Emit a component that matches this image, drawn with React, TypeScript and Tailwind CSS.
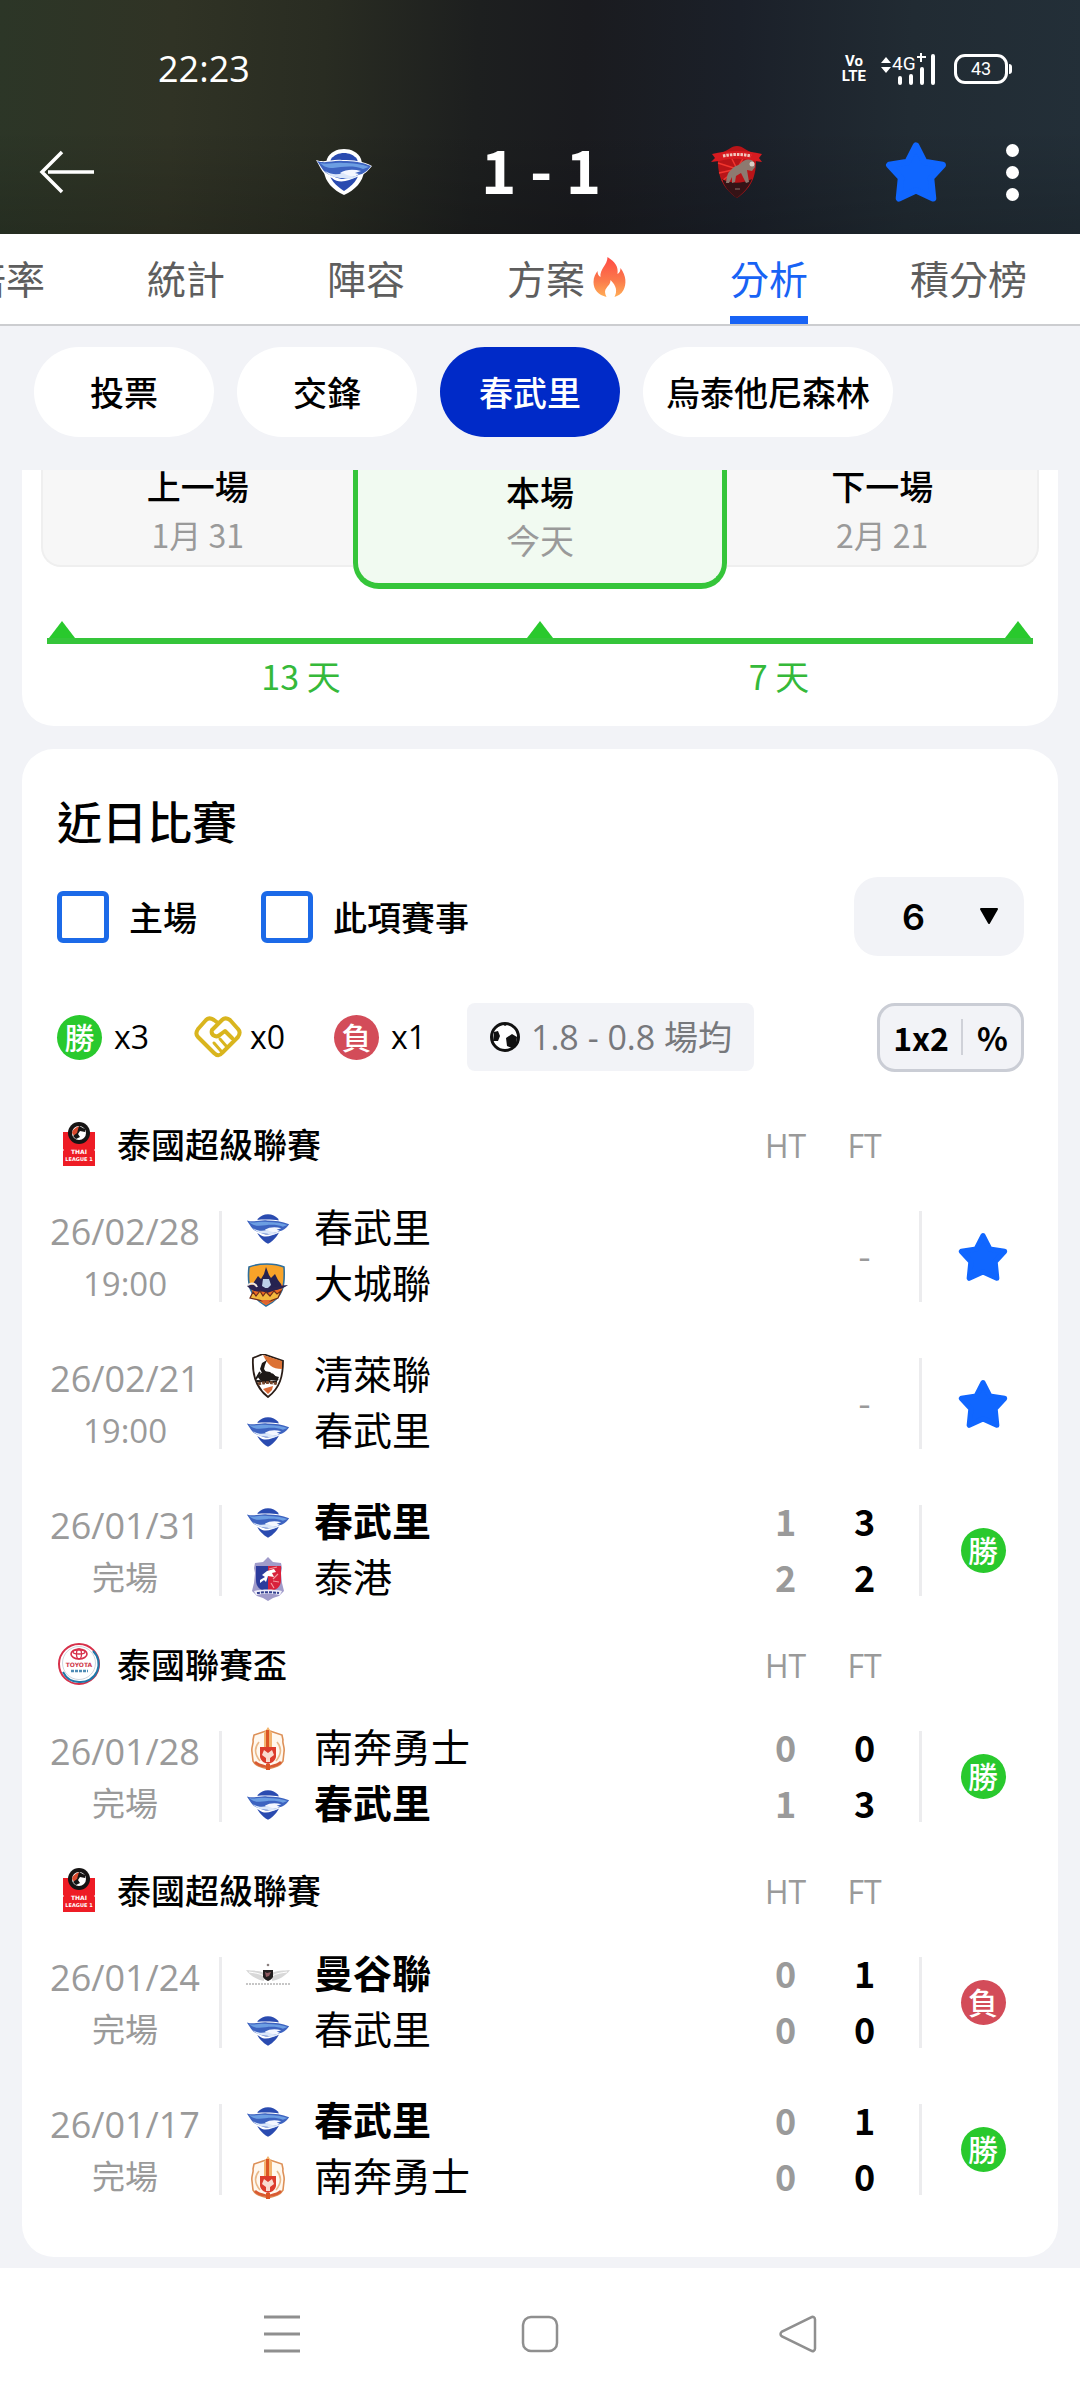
import { useState } from "react";

type Club = "chonburi" | "ayutthaya" | "chiangrai" | "port" | "lamphun" | "bangkok";
type Outcome = "win" | "loss" | "star";

interface Side {
  club: Club;
  name: string;
  winner?: boolean;
  ht?: number;
  ft?: number;
}
interface Match {
  date: string;
  status: string;
  sides: [Side, Side];
  outcome: Outcome;
}
interface League {
  logo: "thai" | "cup";
  name: string;
  matches: Match[];
}

const LEAGUES: League[] = [
  {
    logo: "thai",
    name: "泰國超級聯賽",
    matches: [
      {
        date: "26/02/28",
        status: "19:00",
        sides: [
          { club: "chonburi", name: "春武里" },
          { club: "ayutthaya", name: "大城聯" },
        ],
        outcome: "star",
      },
      {
        date: "26/02/21",
        status: "19:00",
        sides: [
          { club: "chiangrai", name: "清萊聯" },
          { club: "chonburi", name: "春武里" },
        ],
        outcome: "star",
      },
      {
        date: "26/01/31",
        status: "完場",
        sides: [
          { club: "chonburi", name: "春武里", winner: true, ht: 1, ft: 3 },
          { club: "port", name: "泰港", ht: 2, ft: 2 },
        ],
        outcome: "win",
      },
    ],
  },
  {
    logo: "cup",
    name: "泰國聯賽盃",
    matches: [
      {
        date: "26/01/28",
        status: "完場",
        sides: [
          { club: "lamphun", name: "南奔勇士", ht: 0, ft: 0 },
          { club: "chonburi", name: "春武里", winner: true, ht: 1, ft: 3 },
        ],
        outcome: "win",
      },
    ],
  },
  {
    logo: "thai",
    name: "泰國超級聯賽",
    matches: [
      {
        date: "26/01/24",
        status: "完場",
        sides: [
          { club: "bangkok", name: "曼谷聯", winner: true, ht: 0, ft: 1 },
          { club: "chonburi", name: "春武里", ht: 0, ft: 0 },
        ],
        outcome: "loss",
      },
      {
        date: "26/01/17",
        status: "完場",
        sides: [
          { club: "chonburi", name: "春武里", winner: true, ht: 0, ft: 1 },
          { club: "lamphun", name: "南奔勇士", ht: 0, ft: 0 },
        ],
        outcome: "win",
      },
    ],
  },
];

function StarIcon({ className }: { className: string }) {
  return (
    <svg viewBox="0 0 48 48" className={className} aria-hidden="true">
      <path
        d="M24 3.5 30.5 16.3 44.7 18.6 35.6 28.6 37.2 44.4 24 38.2 10.8 44.4 12.4 28.6 3.3 18.6 17.5 16.3Z"
        fill="#1066ff"
        stroke="#1066ff"
        strokeWidth="5"
        strokeLinejoin="round"
      />
    </svg>
  );
}

function SharkLogo({ className }: { className: string }) {
  return (
    <svg viewBox="0 0 56 46" className={className} aria-hidden="true">
      <path d="M11 10C14 3 21 0 28 0s14 3 17 10l3 12c-1 11-9 19-20 24C17 41 9 33 8 22Z" fill="#fff" />
      <path d="M15 10c3-4 8-6 13-6s10 2 13 6l3 10c-1 10-8 17-16 22-8-5-15-12-16-22Z" fill="#2a4bb0" />
      <path d="M0 11c9 3 16-1 26 0 12 0 21 1 30 6-4 5-8 9-15 11-8 3-17 8-25 1C7 27 5 19 0 11Z" fill="#fff" />
      <path d="M1 12c9 3 16-1 26 0 10 0 19 1 28 5-2 3-5 6-9 8-8 2-17 9-29 2C8 25 6 19 1 12Z" fill="#3d63c0" />
      <path d="M4 14c8 2 14-1 23 0 10 0 19 1 26 4l-6 2c-10-4-21-2-30-1-6 0-10-2-13-5Z" fill="#6c9ee2" />
      <path d="M24 24c6-4 14-4 21-2l-6 2 4 1c-5 4-11 4-19-1Z" fill="#f4f7ff" />
      <path d="M9 22c7 4 12 4 18 2 5 3 10 4 15 3-5 3-10 4-15 2-8 0-14-2-18-7Z" fill="#dbe7fa" />
    </svg>
  );
}

function UthaiLogo() {
  return (
    <svg viewBox="0 0 54 54" className="h-[54px] w-[54px]" aria-hidden="true">
      <path d="M8 9C18 6 21 1 27 1s9 5 19 8c1 20-3 33-19 44C11 42 7 29 8 9Z" fill="#b81418" />
      <path d="M27 24 8 18M27 24 9 28M27 24l-15 12M27 24l17-10M27 24 20 10M27 24l8-14" stroke="#f2352e" strokeWidth="1.5" />
      <path d="M12 34c9 5 20 5 30 0-3 8-9 14-15 19-6-4-12-10-15-19Z" fill="#351316" />
      <path d="M2 9c16-4 34-4 50 0l-3 4 3 4-7-1c-12-3-24-3-36 0l-8 1 4-4Z" fill="#d71b20" />
      <path d="M13 11c9-2 19-2 28 0" fill="none" stroke="#f2c7bd" strokeWidth="3" strokeDasharray="2.5 1" />
      <path d="M16 38c1-6 1-10 5-13 3-4 6-4 9-6 4-5 10-6 14-2l1 5-3 4-5-1 2 12-3 1-5-10-5 3-1 6-3 1v-6l-3 6Z" fill="#8d7a70" />
      <circle cx="42" cy="19" r="2.5" fill="#d8cfc7" />
      <path d="M25 44h5" stroke="#80605c" strokeWidth="1.2" />
    </svg>
  );
}

function AyutthayaLogo() {
  return (
    <svg viewBox="0 0 44 44" className="h-11 w-11" aria-hidden="true">
      <path d="M3 4C13 0 29 0 38 4c1 18 0 30-18 39C4 34 1 22 3 4Z" fill="#f8a329" stroke="#2f6f9d" strokeWidth="1.6" />
      <path d="M5 22c10-4 22-4 32 0-1 9-7 16-17 20C11 37 6 31 5 22Z" fill="#ef6a22" />
      <path d="m20 4 3 8 2 3 4-4 3 6 3 4 1 4-15 5L6 24l2-5 4-6 3 3 3-5Z" fill="#262250" />
      <path d="M17 16h6l2 6-4 4-5-3Z" fill="#bcd0e8" />
      <path d="M1 23c8-4 12 3 20 2 7 0 13-3 21-3-7 5-13 5-20 6-8 1-15 2-21-5Z" fill="#2b2350" />
      <path d="M2 22c4-3 8-1 9 2" fill="none" stroke="#efe6df" strokeWidth="2" />
      <path d="m4 35 3-6 3 4 4-5 3 5 3-4 4 4 4-5 3 3 4-3-3 7-11 4Z" fill="#f4b83d" stroke="#6d2c1c" strokeWidth="1.2" />
      <path d="M15 37h10l-5 5Z" fill="#df6430" />
    </svg>
  );
}

function ChiangRaiLogo() {
  return (
    <svg viewBox="0 0 44 44" className="h-11 w-11" aria-hidden="true">
      <path d="M7 4 17 0l20 7c0 15-3 27-15 36C10 34 6 20 7 4Z" fill="#fff" stroke="#2a1d17" strokeWidth="1.8" />
      <path d="m17 1 19 6v8C26 15 22 11 17 1Z" fill="#dc7235" />
      <path d="m21 6-5 3-2 6 2 4 4-1-2-3 1-4Z" fill="#1d1917" />
      <path d="m11 22 7-5 6 1 5 4 4 1-2 4-6-1-5 3-6-3Z" fill="#1d1917" />
      <path d="m11 27 20 1M14 18l-4 7M26 20l6 6" stroke="#1d1917" strokeWidth="1.8" />
      <path d="M12 30c7-2 13-2 19 0" fill="none" stroke="#76482f" strokeWidth="3" strokeDasharray="3 1" />
      <path d="m20 34 7-2-1 4-4 4-5-5Z" fill="#dc6b38" />
    </svg>
  );
}

function PortLogo() {
  return (
    <svg viewBox="0 0 44 44" className="h-11 w-11" aria-hidden="true">
      <path d="m22 0 5 5 8 1 1 5-1 5 1 10 2 8-5 5-6 2-5 3-5-3-6-2-5-5 2-8 1-10-1-5 1-5 8-1Z" fill="#a09bca" />
      <path d="M10 9h12v25c-8 0-12-4-12-11Z" fill="#2c3c9d" />
      <path d="M22 9h13v14c0 7-5 11-13 11Z" fill="#d8213b" />
      <path d="m14 23 5-3-3-2 5-4 7-2 2 3-4 1 2 4-6-1-2 6-2-2-4 3Z" fill="#fff" />
      <path d="m27 22 5-5M27 24l6 1M25 26l3 5M23 12l8-2" stroke="#f29a9f" strokeWidth="1.2" />
      <path d="M8 34c9-2 19-2 28 0l-2 4c-8-2-16-2-24 0Z" fill="#f0effa" />
      <path d="M11 36c7-1 15-1 22 0" fill="none" stroke="#33408f" strokeWidth="2" strokeDasharray="3 1" />
    </svg>
  );
}

function LamphunLogo() {
  return (
    <svg viewBox="0 0 44 44" className="h-11 w-11" aria-hidden="true">
      <path d="M20 4 8 8l-1 5c1 3-2 7-1 12l1 9c3 5 7 6 15 8 8-2 12-3 15-8l1-9c1-5-2-9-1-12l-1-5-12-4" fill="#fff8ef" stroke="#dd9057" strokeWidth="1.6" />
      <path d="M13 15c-5 6-4 13 1 19M31 15c5 6 4 13-1 19" fill="none" stroke="#e9b98a" strokeWidth="1.6" />
      <path d="M18 6 22 0l4 6v14h-8Z" fill="#f3b36e" />
      <path d="M20 3h3v17h-3Z" fill="#dc5524" />
      <path d="M14 20h16v10c-1 4-4 6-8 7-4-1-7-3-8-7Z" fill="#dc3c2c" />
      <path d="m18 23 4 3 4-3 2 5-4 3v4h-4v-4l-4-3Z" fill="#f9dcd0" />
      <path d="M9 35c4 4 9 4 13 5 4-1 9-1 13-5" fill="none" stroke="#d95a32" strokeWidth="2.5" />
      <path d="M20 37h4v6h-4Z" fill="#dc5524" />
    </svg>
  );
}

function BangkokLogo() {
  return (
    <svg viewBox="0 0 44 44" className="h-11 w-11" aria-hidden="true">
      <path d="M0 17c7 1 13 0 18 3v8C12 27 4 23 0 17Z" fill="#d8d8d8" />
      <path d="M44 17c-7 1-13 0-18 3v8c6-1 14-5 18-11Z" fill="#d8d8d8" />
      <path d="M3 19c6 1 10 1 15 4M41 19c-6 1-10 1-15 4" fill="none" stroke="#fff" />
      <path d="M17 17h10v7c-1 2-3 3-5 4-2-1-4-2-5-4Z" fill="#231f20" />
      <path d="m19 19 2 1 4-1-2 4-3 1Z" fill="#8d5960" />
      <circle cx="22" cy="12" r="1.3" fill="#8a8080" />
      <path d="M0 31h44" stroke="#c6c6c6" strokeWidth="2" strokeDasharray="2 1" />
    </svg>
  );
}

function ClubLogo({ club }: { club: Club }) {
  switch (club) {
    case "chonburi":
      return <SharkLogo className="h-9 w-11" />;
    case "ayutthaya":
      return <AyutthayaLogo />;
    case "chiangrai":
      return <ChiangRaiLogo />;
    case "port":
      return <PortLogo />;
    case "lamphun":
      return <LamphunLogo />;
    case "bangkok":
      return <BangkokLogo />;
  }
}

function LeagueLogo({ kind }: { kind: "thai" | "cup" }) {
  if (kind === "thai") {
    return (
      <svg viewBox="0 0 44 46" className="h-[46px] w-11" aria-hidden="true">
        <path d="M6 11h32v17l-1 1 1 1v15H6V30l1-1-1-1Z" fill="#ee1c25" />
        <circle cx="22" cy="12" r="11" fill="#161414" />
        <circle cx="22" cy="12" r="7" fill="#fff" />
        <path d="M15 12c1-4 4-6 8-7l-3 8-2 3Z" fill="#d9482c" />
        <path d="m22 5 6 3v3l-5-1-2 3 2 3-4 2-3-3 4-3Z" fill="#161414" />
        <text x="22" y="33" textAnchor="middle" fontSize="6" fontWeight="700" fill="#fff" fontFamily="DejaVu Sans">THAI</text>
        <text x="22" y="40" textAnchor="middle" fontSize="5" fontWeight="700" fill="#fff" fontFamily="DejaVu Sans">LEAGUE 1</text>
      </svg>
    );
  }
  return (
    <svg viewBox="0 0 44 44" className="h-11 w-11" aria-hidden="true">
      <circle cx="22" cy="22" r="20" fill="#fff" stroke="#d7304a" strokeWidth="2" />
      <path d="M36 9a18 18 0 0 1-14 31A18 18 0 0 1 6 30" fill="none" stroke="#1f77a8" strokeWidth="2" />
      <circle cx="22" cy="21" r="16.5" fill="#fff" stroke="#cfd6de" />
      <ellipse cx="22" cy="12" rx="8" ry="5" fill="none" stroke="#d7304a" strokeWidth="1.6" />
      <ellipse cx="22" cy="10" rx="6" ry="2" fill="none" stroke="#d7304a" strokeWidth="1.3" />
      <ellipse cx="22" cy="12" rx="2.5" ry="5" fill="none" stroke="#d7304a" strokeWidth="1.3" />
      <text x="22" y="25" textAnchor="middle" fontSize="6" fontWeight="700" fill="#cf3a4c" fontFamily="DejaVu Sans">TOYOTA</text>
      <path d="M14 29h17" stroke="#4f8cb4" strokeWidth="2.5" strokeDasharray="3 1" />
    </svg>
  );
}

function ResultBadge({ outcome }: { outcome: "win" | "loss" }) {
  return (
    <span
      className={
        outcome === "win"
          ? "flex size-[45px] items-center justify-center rounded-full bg-[#29c92d] pb-[3px] font-['Noto_Sans_CJK_TC'] text-[30px] leading-none font-medium text-white"
          : "flex size-[45px] items-center justify-center rounded-full bg-[#d34c59] pb-[3px] font-['Noto_Sans_CJK_TC'] text-[30px] leading-none font-medium text-white"
      }
    >
      {outcome === "win" ? "勝" : "負"}
    </span>
  );
}

function Header() {
  return (
    <header className="bg-[linear-gradient(180deg,rgba(0,0,0,0)_55%,rgba(0,0,0,0.16)_100%),linear-gradient(92deg,#2c3627_0%,#303325_16%,#292c22_30%,#1d1f1f_44%,#1a1b1f_54%,#1b2029_68%,#212b33_84%,#232f38_100%)] pb-7 text-white">
      <div className="flex h-[138px] items-center justify-between pr-[68px] pl-[158px]">
        <span className="font-['Open_Sans'] text-4xl">22:23</span>
        <div className="flex items-center font-['Roboto']">
          <span className="mr-3 flex flex-col items-center text-[15px] leading-[15px] font-bold">
            <span>Vo</span>
            <span>LTE</span>
          </span>
          <svg viewBox="0 0 60 34" className="mr-4 h-[34px] w-[60px]" aria-hidden="true">
            <path d="m3 11 5-6 5 6ZM3 15l5 6 5-6Z" fill="#fff" />
            <text x="14" y="18" fontSize="19" fontFamily="Roboto" fill="#fff">4G</text>
            <path d="M43 1v9M39 5h9" stroke="#fff" strokeWidth="2" />
            <path d="M22 31v-5M33 31V24M44 31V17M55 31V4" stroke="#fff" strokeWidth="4" strokeLinecap="round" />
          </svg>
          <span className="flex h-[30px] w-[54px] items-center justify-center rounded-[11px] border-[3px] border-white text-lg leading-none">43</span>
          <span className="ml-px h-[10px] w-[3px] rounded-r bg-white" />
        </div>
      </div>
      <div className="grid h-[68px] grid-cols-[1fr_auto_1fr] items-center px-[38px]">
        <button type="button" aria-label="返回" className="w-[58px]">
          <svg viewBox="0 0 58 46" className="h-[46px] w-[58px]" aria-hidden="true">
            <path d="M24 3 4 23l20 20M10 23h46" fill="none" stroke="#fff" strokeWidth="3.5" />
          </svg>
        </button>
        <div className="flex w-[448px] items-center justify-between">
          <SharkLogo className="h-[46px] w-14" />
          <h1 className="pb-2 text-[60px] leading-none font-bold">1 - 1</h1>
          <UthaiLogo />
        </div>
        <div className="flex items-center justify-end gap-[35px]">
          <button type="button" aria-label="收藏">
            <StarIcon className="size-[62px]" />
          </button>
          <button type="button" aria-label="更多" className="flex w-[60px] flex-col items-center gap-[9px]">
            <span className="size-[13px] rounded-full bg-white" />
            <span className="size-[13px] rounded-full bg-white" />
            <span className="size-[13px] rounded-full bg-white" />
          </button>
        </div>
      </div>
    </header>
  );
}

function FireIcon() {
  return (
    <svg viewBox="0 0 32 40" className="h-10 w-[37px]" aria-hidden="true">
      <defs>
        <linearGradient id="flame" x1="0" y1="0" x2="0" y2="1">
          <stop offset="0" stopColor="#ff4a44" />
          <stop offset="0.6" stopColor="#fb7b4c" />
          <stop offset="1" stopColor="#ffae57" />
        </linearGradient>
      </defs>
      <path
        d="M14 0c8 5 11 10 10 17 2-1 3-3 3-6 6 8 6 16 3 22-2 4-6 6-9 7 3-6 2-11-4-17 0 4-2 5-4 8-2 2-2 5 0 9C5 38 0 33 0 25c0-5 2-8 4-11 0 3 1 5 3 6C6 12 14 8 14 0Z"
        fill="url(#flame)"
      />
    </svg>
  );
}

const TABS = ["倍率", "統計", "陣容", "方案", "分析", "積分榜"];

function TabBar() {
  return (
    <nav className="overflow-hidden border-b-2 border-[#cccdd0] bg-white">
      <ul className="-ml-[33px] flex h-[90px] gap-[102px]">
        {TABS.map((t) => (
          <li key={t} className="shrink-0">
            <a
              href="#"
              className={
                t === "分析"
                  ? "flex h-full items-center border-b-8 border-[#1863f5] pt-1 text-[39px] leading-none text-[#1863f5]"
                  : "flex h-full items-center gap-[6px] pb-1 text-[39px] leading-none text-[#5e5e5e]"
              }
            >
              {t}
              {t === "方案" && <FireIcon />}
            </a>
          </li>
        ))}
      </ul>
    </nav>
  );
}

const CHIPS = ["投票", "交鋒", "春武里", "烏泰他尼森林"];

function Chips() {
  return (
    <div className="flex gap-[23px] px-[34px] pt-[21px] pb-[33px]">
      {CHIPS.map((c) => (
        <button
          key={c}
          type="button"
          className={
            c === "春武里"
              ? "h-[90px] min-w-[180px] rounded-full bg-[#002ac8] px-[23px] text-[34px] leading-none font-medium text-white"
              : "h-[90px] min-w-[180px] rounded-full bg-white px-[23px] text-[34px] leading-none font-medium text-black"
          }
        >
          {c}
        </button>
      ))}
    </div>
  );
}

function Schedule() {
  return (
    <section className="mx-[22px] rounded-b-[32px] bg-white px-[19px] pb-[26px]">
      <div className="grid grid-cols-[312fr_375fr_312fr] items-start">
        <div className="flex h-[97px] flex-col items-center rounded-bl-[20px] border-b-2 border-l-2 border-[#efefef] bg-[#f7f7f7] text-[34px] leading-[48px]">
          <span className="-mt-2 font-medium">上一場</span>
          <span className="text-[32px] text-[#9a9a9a]">1月 31</span>
        </div>
        <div className="flex h-[119px] flex-col items-center rounded-b-[26px] border-x-[5px] border-b-[6px] border-[#35c53a] bg-[#f1faf1] text-[34px] leading-[48px]">
          <span className="-mt-[2px] font-medium">本場</span>
          <span className="text-[#9a9a9a]">今天</span>
        </div>
        <div className="flex h-[97px] flex-col items-center rounded-br-[20px] border-r-2 border-b-2 border-[#efefef] bg-[#f7f7f7] text-[34px] leading-[48px]">
          <span className="-mt-2 font-medium">下一場</span>
          <span className="text-[32px] text-[#9a9a9a]">2月 21</span>
        </div>
      </div>
      <div className="mx-[6px] mt-8 flex items-end justify-between border-b-[6px] border-[#35c53a]">
        {[0, 1, 2].map((i) => (
          <svg key={i} viewBox="0 0 30 17" className="h-[17px] w-[30px]" aria-hidden="true">
            <path d="M15 0 28 17H2Z" fill="#29c92d" />
          </svg>
        ))}
      </div>
      <div className="mx-[21px] grid grid-cols-2 pt-2 text-center text-[34px] leading-[48px] text-[#35b93a]">
        <span>13 天</span>
        <span>7 天</span>
      </div>
    </section>
  );
}

function HandshakeIcon() {
  return (
    <svg viewBox="0 0 48 42" className="h-[42px] w-12" aria-hidden="true">
      <g fill="none" stroke="#d9b51e" strokeWidth="4" strokeLinecap="round" strokeLinejoin="round">
        <path d="M24 7 20 4c-3-2-6-2-8 0L4 13c-2 3-2 6 0 8l16 16c3 3 6 3 8 0l16-16c2-3 2-6 0-8l-8-9c-3-2-6-2-8 0L18 14c-1 3 0 5 3 6 2 1 4 0 6-2l4-3 7 7" />
        <path d="m20 27 7 8M26 23l7 8" strokeWidth="3" />
      </g>
    </svg>
  );
}

function BallIcon() {
  return (
    <svg viewBox="0 0 32 32" className="size-8" aria-hidden="true">
      <circle cx="16" cy="16" r="13.5" fill="#fff" stroke="#111" strokeWidth="3" />
      <path d="m12 2 4 3 5-3ZM5 11l4-1 2 5-2 5-5 0ZM17 17l6-4 5 3-1 8-4 3-5-2Z" fill="#111" />
    </svg>
  );
}

function Controls() {
  const [count, setCount] = useState("6");
  return (
    <div className="pr-[34px] pl-[35px]">
      <h2 className="pt-10 text-[45px] leading-[64px] font-medium">近日比賽</h2>
      <div className="mt-6 flex h-[79px] items-center">
        <label className="flex items-center gap-5 text-[34px] leading-none font-medium">
          <input type="checkbox" className="size-[52px] appearance-none rounded-[6px] border-[5px] border-[#1c6ae8] bg-white checked:bg-[#1c6ae8]" />
          主場
        </label>
        <label className="ml-16 flex items-center gap-5 text-[34px] leading-none font-medium">
          <input type="checkbox" className="size-[52px] appearance-none rounded-[6px] border-[5px] border-[#1c6ae8] bg-white checked:bg-[#1c6ae8]" />
          此項賽事
        </label>
        <div className="relative ml-auto">
          <select
            aria-label="場數"
            value={count}
            onChange={(e) => setCount(e.target.value)}
            className="h-[79px] w-[170px] appearance-none rounded-3xl bg-[#f2f3f7] pl-12 font-['Inter'] text-[36px] leading-none font-semibold"
          >
            <option>6</option>
            <option>10</option>
            <option>20</option>
          </select>
          <svg viewBox="0 0 20 18" className="pointer-events-none absolute top-[30px] right-[25px] h-[18px] w-5" aria-hidden="true">
            <path d="M2 2h16l-8 14Z" fill="#000" stroke="#000" strokeWidth="2" strokeLinejoin="round" />
          </svg>
        </div>
      </div>
      <div className="mt-[47px] flex h-[68px] items-center font-['Open_Sans','Noto_Sans_CJK_TC',sans-serif] text-[32px] leading-none">
        <ResultBadge outcome="win" />
        <span className="ml-3 w-20">x3</span>
        <HandshakeIcon />
        <span className="ml-2 w-[84px]">x0</span>
        <ResultBadge outcome="loss" />
        <span className="ml-3 w-[76px]">x1</span>
        <div className="flex h-[68px] items-center gap-[10px] rounded-lg bg-[#f2f3f7] px-[22px] text-[34px] text-[#77787c]">
          <BallIcon />
          <span>1.8 - 0.8 場均</span>
        </div>
        <button type="button" className="ml-auto flex h-[69px] w-[147px] items-center justify-center rounded-[18px] border-[3px] border-[#cacdd5] bg-[#f2f3f7] font-['Noto_Sans_CJK_TC'] text-[32px]">
          <span className="font-bold">1x2</span>
          <span className="mr-[14px] ml-3 h-9 w-[2px] bg-[#cfd1d8]" />
          <span className="font-bold">%</span>
        </button>
      </div>
    </div>
  );
}

function LeagueSection({ league }: { league: League }) {
  return (
    <tbody>
      <tr className="h-[79px]">
        <th colSpan={2} scope="colgroup" className="p-0">
          <div className="flex items-center gap-4 pl-[26px] text-[34px] leading-none font-medium">
            <LeagueLogo kind={league.logo} />
            {league.name}
          </div>
        </th>
        <th scope="col" className="p-0 pt-1 text-center font-['Open_Sans'] text-[32px] leading-none font-normal text-[#9a9a9a]">HT</th>
        <th scope="col" className="p-0 pt-1 pr-[15px] text-center font-['Open_Sans'] text-[32px] leading-none font-normal text-[#9a9a9a]">FT</th>
        <td />
      </tr>
      {league.matches.map((m) => (
        <tr key={m.date} className="h-[147px]">
          <td className="p-0">
            <div className="flex h-[91px] flex-col items-center justify-center border-r-[3px] border-[#ececee] pt-[2px] font-['Open_Sans','Noto_Sans_CJK_TC',sans-serif] text-[#9a9a9a]">
              <span className="text-[36px] leading-[52px]">{m.date}</span>
              <span className="text-[33px] leading-[52px]">{m.status}</span>
            </div>
          </td>
          <td className="p-0">
            {m.sides.map((s) => (
              <div key={s.club} className="flex h-14 items-center gap-6 pl-6 text-[39px] leading-none">
                <ClubLogo club={s.club} />
                <span className={s.winner ? "pb-[6px] font-bold" : "pb-[6px] font-normal"}>{s.name}</span>
              </div>
            ))}
          </td>
          <td className="p-0 pb-[5px] text-center text-[36px] leading-[56px] font-bold text-[#9a9a9a]">
            {m.sides.map((s) => s.ht !== undefined && <div key={s.club}>{s.ht}</div>)}
          </td>
          <td className="p-0 pr-[15px] pb-[5px] text-center text-[36px] leading-[56px] font-bold">
            {m.outcome === "star" ? (
              <span className="font-normal text-[#9a9a9a]">-</span>
            ) : (
              m.sides.map((s) => <div key={s.club}>{s.ft}</div>)
            )}
          </td>
          <td className="p-0">
            <div className="flex h-[91px] items-center justify-center border-l-[3px] border-[#ececee]">
              {m.outcome === "star" ? (
                <button type="button" aria-label="收藏">
                  <StarIcon className="size-[50px]" />
                </button>
              ) : (
                <ResultBadge outcome={m.outcome} />
              )}
            </div>
          </td>
        </tr>
      ))}
    </tbody>
  );
}

function Recent() {
  return (
    <section className="mx-[22px] mt-[23px] rounded-[32px] bg-white pb-[34px]">
      <Controls />
      <div className="mt-[33px] mr-[14px] ml-[9px]">
        <table className="w-full table-fixed border-collapse">
          <colgroup>
            <col className="w-[191px]" />
            <col />
            <col className="w-[79px]" />
            <col className="w-[94px]" />
            <col className="w-[125px]" />
          </colgroup>
          {LEAGUES.map((l, i) => (
            <LeagueSection key={i} league={l} />
          ))}
        </table>
      </div>
    </section>
  );
}

function SystemNav() {
  return (
    <footer className="mt-[11px] grid h-[132px] grid-cols-3 items-center justify-items-center bg-white px-[153px]">
      <button type="button" aria-label="最近">
        <svg viewBox="0 0 40 40" className="size-10" aria-hidden="true">
          <path d="M2 3h36M2 20h36M2 37h36" stroke="#8f8f8f" strokeWidth="3" />
        </svg>
      </button>
      <button type="button" aria-label="主頁">
        <svg viewBox="0 0 40 40" className="size-10" aria-hidden="true">
          <rect x="3" y="3" width="34" height="34" rx="8" fill="none" stroke="#8f8f8f" strokeWidth="2.5" />
        </svg>
      </button>
      <button type="button" aria-label="上一頁">
        <svg viewBox="0 0 40 40" className="size-10" aria-hidden="true">
          <path d="M33 3.5c2-1.5 4 0 4 2v29c0 2-2 3.5-4 2L4 22.500c-2-1.500-2-3.500 0-5Z" fill="none" stroke="#8f8f8f" strokeWidth="2.5" />
        </svg>
      </button>
    </footer>
  );
}

export default function App() {
  return (
    <div className="min-h-screen bg-[#f2f3f7] font-['Noto_Sans_CJK_TC',sans-serif] text-black">
      <Header />
      <TabBar />
      <main>
        <Chips />
        <Schedule />
        <Recent />
      </main>
      <SystemNav />
    </div>
  );
}
